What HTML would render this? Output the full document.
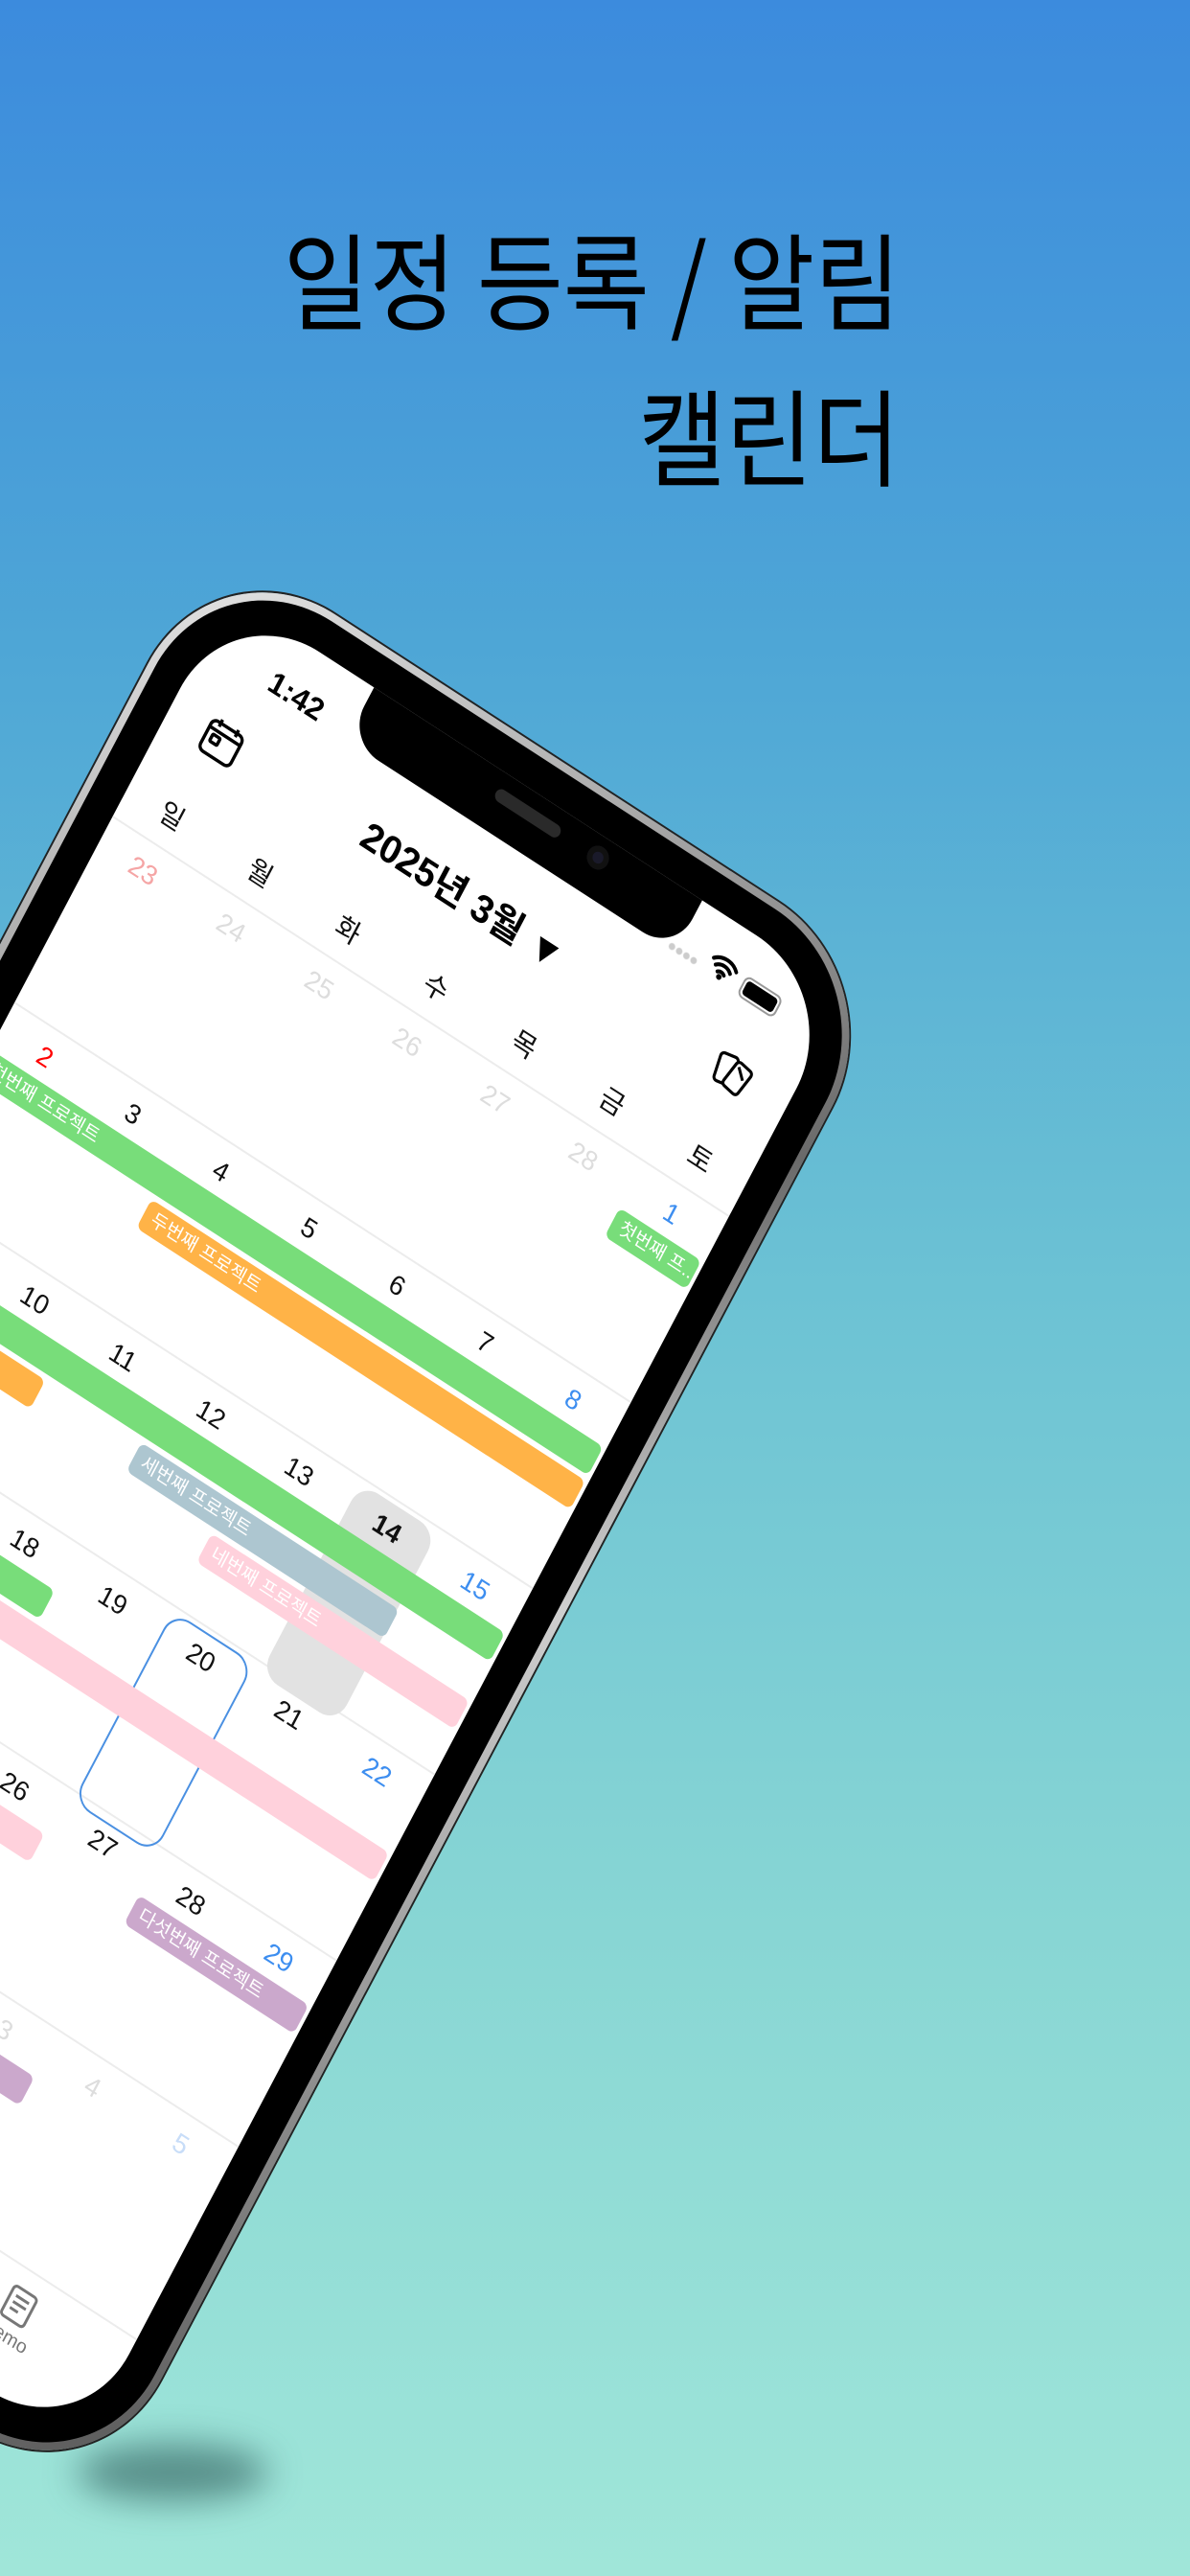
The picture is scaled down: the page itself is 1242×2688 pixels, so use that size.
<!DOCTYPE html>
<html><head><meta charset="utf-8">
<style>
*{margin:0;padding:0;box-sizing:border-box}
html,body{width:1242px;height:2688px;overflow:hidden}
body{position:relative;background:linear-gradient(180deg,#3c8bdd 0%,#4ea6d6 25%,#6cc2d4 50%,#88d6d4 75%,#a0e6d9 100%);font-family:"Liberation Sans","Noto Sans CJK KR",sans-serif}
.hl{position:absolute;right:302px;font-family:"Noto Sans CJK KR","Liberation Sans",sans-serif;font-size:110px;line-height:110px;white-space:nowrap;color:#000;transform-origin:right center}
.shadow{position:absolute;left:80px;top:2550px;width:200px;height:60px;border-radius:50%;background:rgba(20,60,60,.5);filter:blur(18px)}
.phone{position:absolute;left:0;top:0;width:770px;height:1720px;transform-origin:0 0;transform:matrix(0.8355,0.5418,-0.4655,0.8827,240,619.8)}
.rim{position:absolute;left:-42px;top:-42px;width:854px;height:1804px;border-radius:150px;background:linear-gradient(135deg,#e8e8e8,#6a6a6a 40%,#cfcfcf 60%,#555);box-shadow:0 0 0 2px #222}
.bez{position:absolute;left:-34px;top:-34px;width:838px;height:1788px;border-radius:142px;background:#000}
.scr{position:absolute;left:0;top:0;width:770px;height:1720px;border-radius:112px;background:#fff;overflow:hidden}
.notch{position:absolute;left:180px;top:-10px;width:410px;height:72px;background:#000;border-radius:0 0 40px 40px}
.spk{position:absolute;left:165px;top:26px;width:80px;height:14px;border-radius:7px;background:#2a2a2a}
.cam{position:absolute;left:280px;top:20px;width:24px;height:24px;border-radius:50%;background:#1a1a2a;box-shadow:inset 0 0 0 6px #111}
.t{position:absolute;width:110px;text-align:center;font-size:28px;line-height:32px;color:#111}
.wd{position:absolute;width:110px;text-align:center;font-size:29px;line-height:34px;color:#111;top:213px}
.ln{position:absolute;left:0;width:770px;height:2px;background:#ececec}
.bar{position:absolute;height:34px;border-radius:7px;color:#fff;font-size:20px;line-height:34px;padding-left:10px;white-space:nowrap;overflow:hidden}
.g{background:#78dd7a}.o{background:#ffb347}.b{background:#adc6d0}.p{background:#ffd1dc}.v{background:#cba8cc}
</style></head><body>
<div class="hl" style="top:233px;transform:scaleX(0.89)">일정 등록 / 알림</div>
<div class="hl" style="top:396px;transform:scaleX(0.9)">캘린더</div>
<div class="shadow"></div>

<div class="phone">
 <div class="rim"></div>
 <div class="bez"></div>
 <div class="scr">
  <div class="notch"><div class="spk"></div><div class="cam"></div></div>
  <div style="position:absolute;left:72px;top:34px;width:80px;text-align:center;font-size:32px;font-weight:bold">1:42</div>
  <div style="position:absolute;left:580px;top:54px;width:36px;height:8px;background:radial-gradient(circle,#ccc 3px,transparent 4px) 0 0/9px 8px"></div>
  <svg style="position:absolute;left:626px;top:34px" width="34" height="28" viewBox="0 0 34 28"><path d="M3 10a20 20 0 0 1 28 0M8 15a13 13 0 0 1 18 0M13 20a6 6 0 0 1 8 0" fill="none" stroke="#000" stroke-width="4" stroke-linecap="round"/><circle cx="17" cy="24" r="3"/></svg>
  <div style="position:absolute;left:668px;top:40px;width:46px;height:24px;border:2px solid #999;border-radius:7px;padding:2px"><div style="width:100%;height:100%;background:#000;border-radius:4px"></div></div>
  <svg style="position:absolute;left:42px;top:112px" width="46" height="46" viewBox="0 0 46 46" fill="none" stroke="#000" stroke-width="3.5" stroke-linejoin="round"><rect x="4" y="7" width="38" height="35" rx="6"/><path d="M4 16h38M13 3v8M33 3v8"/><rect x="11" y="21" width="9" height="8" rx="1"/></svg>
  <svg style="position:absolute;left:680px;top:110px" width="50" height="50" viewBox="0 0 50 50" fill="none" stroke="#000" stroke-width="3.2" stroke-linejoin="round"><rect x="5" y="10" width="20" height="30" rx="4" transform="rotate(-10 15 25)" fill="#fff"/><rect x="20" y="12" width="20" height="30" rx="4" transform="rotate(10 30 27)" fill="#fff"/><path d="M26 16l10 10"/></svg>
  <div style="position:absolute;left:200px;top:112px;width:330px;text-align:center;font-size:40px;font-weight:bold;line-height:44px">2025년 3월 ▼</div>

  <div class="wd" style="left:0">일</div><div class="wd" style="left:110px">월</div><div class="wd" style="left:220px">화</div><div class="wd" style="left:330px">수</div><div class="wd" style="left:440px">목</div><div class="wd" style="left:550px">금</div><div class="wd" style="left:660px">토</div>

  <div class="ln" style="top:262px"></div><div class="ln" style="top:482px"></div><div class="ln" style="top:702px"></div><div class="ln" style="top:922px"></div><div class="ln" style="top:1142px"></div><div class="ln" style="top:1362px"></div><div class="ln" style="top:1590px"></div>

  <div style="position:absolute;left:558px;top:708px;width:96px;height:226px;border-radius:22px;background:#e2e2e2"></div>
  <div style="position:absolute;left:446px;top:928px;width:102px;height:226px;border-radius:22px;border:2px solid #4a90e2"></div>

  <div class="t" style="left:0;top:278px;color:#f5a5a5">23</div><div class="t" style="left:110px;top:278px;color:#ddd">24</div><div class="t" style="left:220px;top:278px;color:#ddd">25</div><div class="t" style="left:330px;top:278px;color:#ddd">26</div><div class="t" style="left:440px;top:278px;color:#ddd">27</div><div class="t" style="left:550px;top:278px;color:#ddd">28</div><div class="t" style="left:660px;top:278px;color:#3d8ef0">1</div>
  <div class="bar g" style="left:664px;top:318px;width:102px">첫번째 프...</div>
  <div class="t" style="left:0;top:498px;color:#f00">2</div><div class="t" style="left:110px;top:498px">3</div><div class="t" style="left:220px;top:498px">4</div><div class="t" style="left:330px;top:498px">5</div><div class="t" style="left:440px;top:498px">6</div><div class="t" style="left:550px;top:498px">7</div><div class="t" style="left:660px;top:498px;color:#3d8ef0">8</div>
  <div class="bar g" style="left:-10px;top:538px;width:776px;padding-left:20px">첫번째 프로젝트</div>
  <div class="bar o" style="left:224px;top:578px;width:542px">두번째 프로젝트</div>
  <div class="t" style="left:0;top:718px;color:#f00">9</div><div class="t" style="left:110px;top:718px">10</div><div class="t" style="left:220px;top:718px">11</div><div class="t" style="left:330px;top:718px">12</div><div class="t" style="left:440px;top:718px">13</div><div class="t" style="left:550px;top:718px;font-weight:bold">14</div><div class="t" style="left:660px;top:718px;color:#3d8ef0">15</div>
  <div class="bar g" style="left:-10px;top:758px;width:776px"></div>
  <div class="bar o" style="left:-10px;top:798px;width:224px"></div>
  <div class="bar b" style="left:334px;top:798px;width:322px">세번째 프로젝트</div>
  <div class="bar p" style="left:444px;top:838px;width:322px">네번째 프로젝트</div>
  <div class="t" style="left:0;top:938px;color:#f00">16</div><div class="t" style="left:110px;top:938px">17</div><div class="t" style="left:220px;top:938px">18</div><div class="t" style="left:330px;top:938px">19</div><div class="t" style="left:440px;top:938px">20</div><div class="t" style="left:550px;top:938px">21</div><div class="t" style="left:660px;top:938px;color:#3d8ef0">22</div>
  <div class="bar g" style="left:-10px;top:978px;width:336px"></div>
  <div class="bar p" style="left:-10px;top:1018px;width:776px"></div>
  <div class="t" style="left:0;top:1158px;color:#f00">23</div><div class="t" style="left:110px;top:1158px">24</div><div class="t" style="left:220px;top:1158px">25</div><div class="t" style="left:330px;top:1158px">26</div><div class="t" style="left:440px;top:1158px">27</div><div class="t" style="left:550px;top:1158px">28</div><div class="t" style="left:660px;top:1158px;color:#3d8ef0">29</div>
  <div class="bar p" style="left:-10px;top:1198px;width:446px"></div>
  <div class="bar v" style="left:554px;top:1198px;width:212px">다섯번째 프로젝트</div>
  <div class="t" style="left:0;top:1378px;color:#f00">30</div><div class="t" style="left:110px;top:1378px">31</div><div class="t" style="left:220px;top:1378px;color:#ddd">1</div><div class="t" style="left:330px;top:1378px;color:#ddd">2</div><div class="t" style="left:440px;top:1378px;color:#ddd">3</div><div class="t" style="left:550px;top:1378px;color:#ddd">4</div><div class="t" style="left:660px;top:1378px;color:#c8ddf8">5</div>
  <div class="bar v" style="left:-10px;top:1418px;width:556px"></div>

  <svg style="position:absolute;left:176px;top:1608px" width="40" height="40" viewBox="0 0 40 40" fill="none" stroke="#888" stroke-width="3"><rect x="4" y="6" width="32" height="30" rx="5"/><path d="M4 14h32"/></svg>
  <div style="position:absolute;left:136px;top:1650px;width:120px;text-align:center;font-size:20px;color:#888">Calendar</div>
  <svg style="position:absolute;left:624px;top:1608px" width="40" height="42" viewBox="0 0 40 42" fill="none" stroke="#777" stroke-width="3" stroke-linejoin="round"><rect x="6" y="4" width="28" height="34" rx="4"/><path d="M12 13h16M12 20h16M12 27h10"/></svg>
  <div style="position:absolute;left:584px;top:1652px;width:120px;text-align:center;font-size:20px;color:#777">Memo</div>
 </div>
</div>
</body></html>
